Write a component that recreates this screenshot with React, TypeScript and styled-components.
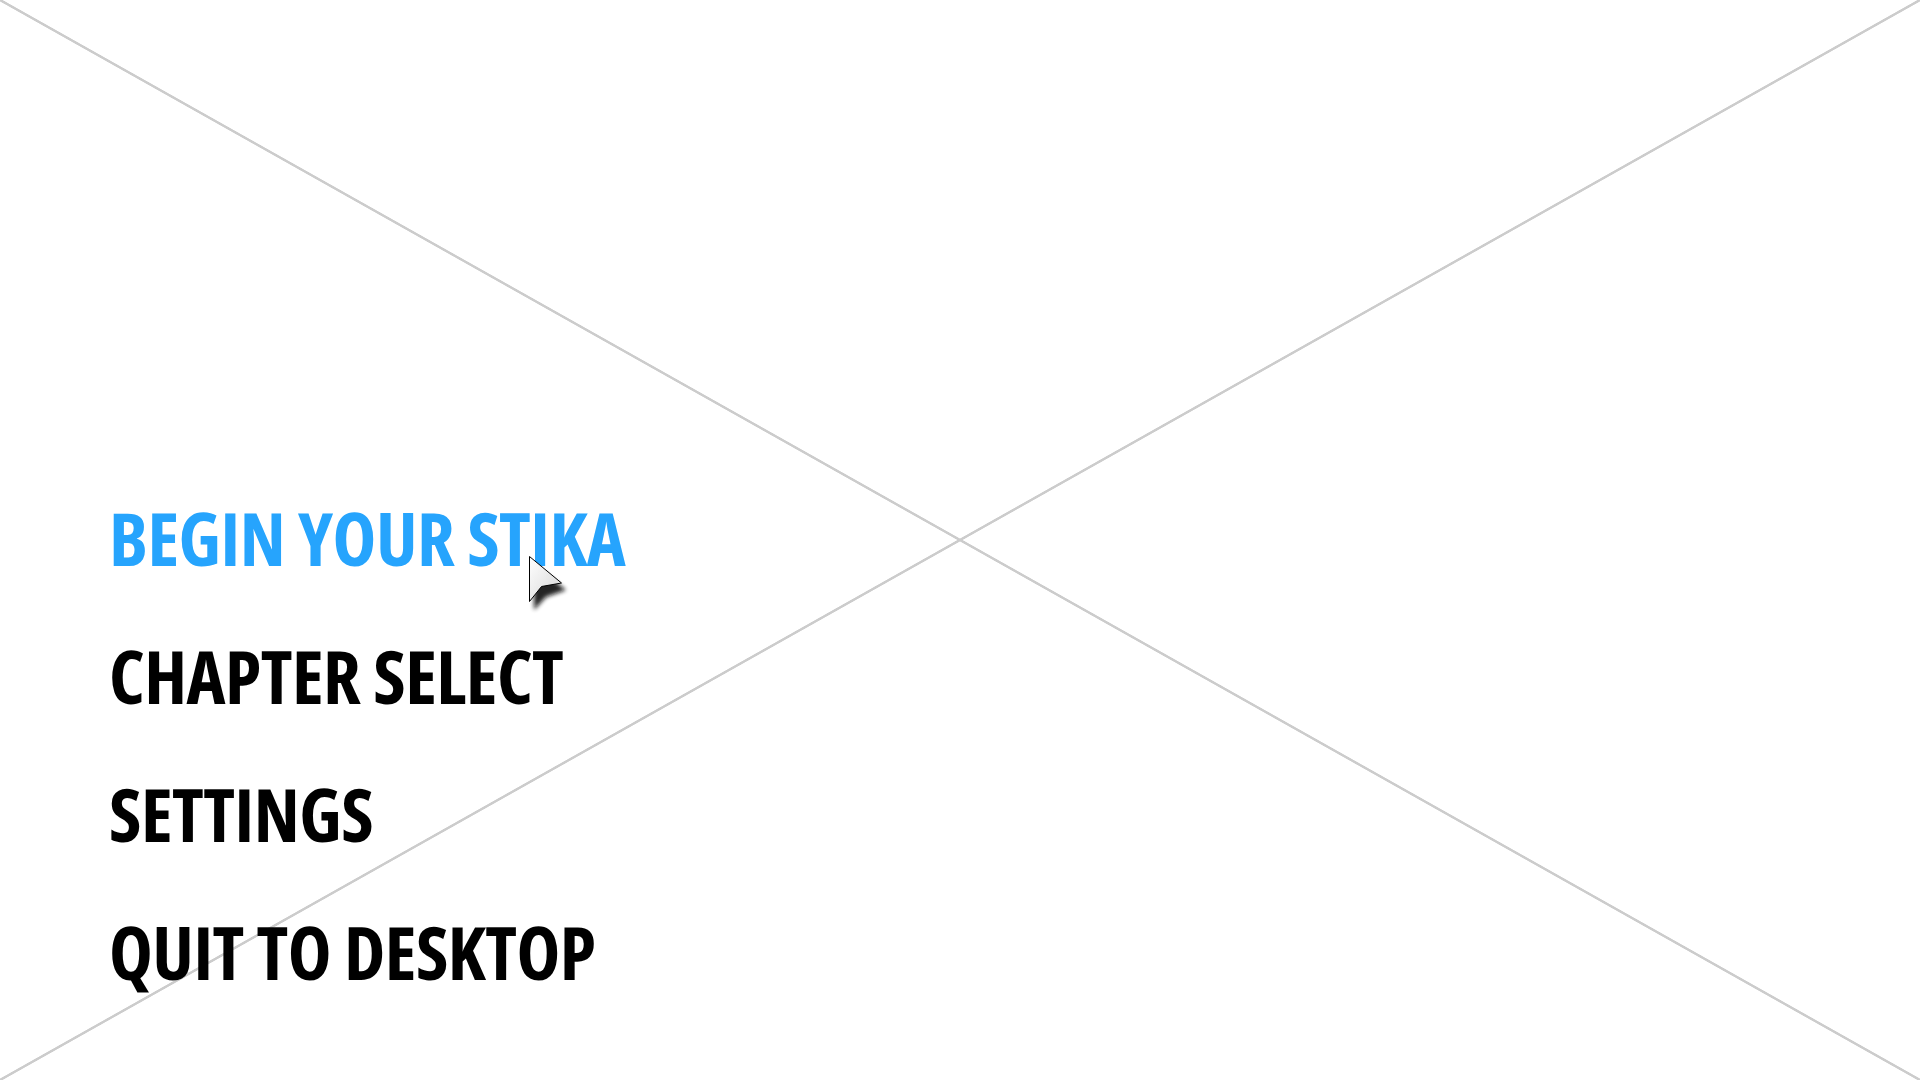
import React from 'react';
import styled, { createGlobalStyle } from 'styled-components';

const GlobalStyle = createGlobalStyle`
  html, body {
    margin: 0;
    padding: 0;
    background: #fff;
  }
  * {
    box-sizing: border-box;
  }
`;

// placeholder backdrop: white frame crossed by two grey diagonals
const Screen = styled.main`
  position: relative;
  width: 100vw;
  height: 100vh;
  overflow: hidden;
  background-color: #fff;
  background-image:
    linear-gradient(to top right, transparent calc(50% - 1.6px), #cccccc calc(50% - 0.9px), #cccccc calc(50% + 0.9px), transparent calc(50% + 1.6px)),
    linear-gradient(to bottom right, transparent calc(50% - 1.6px), #cccccc calc(50% - 0.9px), #cccccc calc(50% + 0.9px), transparent calc(50% + 1.6px));
  padding: 469px 0 0 109px;
`;

const Menu = styled.nav`
  display: flex;
  flex-direction: column;
  align-items: flex-start;
`;

const MenuItem = styled.a<{ $active?: boolean }>`
  font-family: 'Open Sans', 'Noto Sans', sans-serif;
  font-stretch: 75%;
  font-weight: 700;
  font-size: 74px;
  line-height: 138px;
  letter-spacing: -0.5px;
  text-transform: uppercase;
  text-decoration: none;
  white-space: nowrap;
  color: ${({ $active }) => ($active ? '#26a4fd' : '#000')};
  cursor: default;
`;

const Pointer = styled.svg`
  position: absolute;
  left: 524px;
  top: 552px;
  width: 50px;
  height: 62px;
  overflow: visible;
  pointer-events: none;
`;

const items = ['Begin your Stika', 'Chapter select', 'Settings', 'Quit to desktop'];

function Cursor() {
  return (
    <Pointer viewBox="0 0 50 62">
      <defs>
        <filter id="cursor-shadow" x="-50%" y="-50%" width="200%" height="200%">
          <feGaussianBlur stdDeviation="2.2" />
        </filter>
        <linearGradient id="cursor-fill" x1="0" y1="0" x2="1" y2="1">
          <stop offset="0" stopColor="#ffffff" />
          <stop offset="0.6" stopColor="#e6e6e6" />
          <stop offset="1" stopColor="#d8d8d8" />
        </linearGradient>
      </defs>
      <path
        d="M10 13 L10 58 L22 45 L42 38 Z"
        fill="#111"
        opacity="0.9"
        filter="url(#cursor-shadow)"
      />
      <path
        d="M5.5 4.5 L5.5 49.5 L17.5 34.5 L37.5 31 Z"
        fill="url(#cursor-fill)"
        stroke="#000"
        strokeWidth="1"
        strokeLinejoin="miter"
      />
    </Pointer>
  );
}

export default function App() {
  return (
    <>
      <GlobalStyle />
      <Screen>
        <Menu>
          {items.map((label, i) => (
            <MenuItem key={label} $active={i === 0}>
              {label}
            </MenuItem>
          ))}
        </Menu>
        <Cursor />
      </Screen>
    </>
  );
}
